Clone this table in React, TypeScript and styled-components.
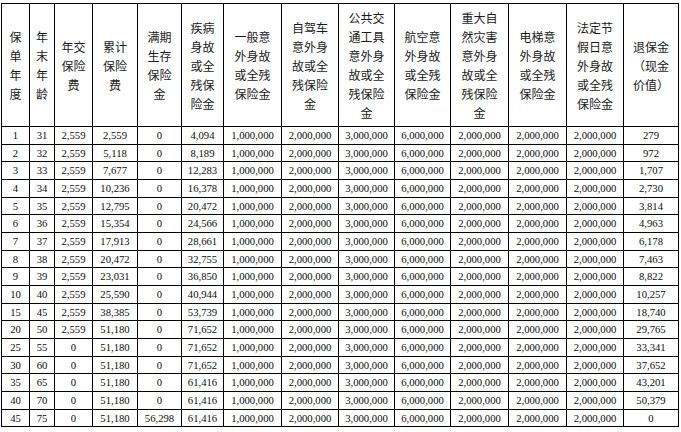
import React from "react";
import styled, { createGlobalStyle } from "styled-components";

const Global = createGlobalStyle`
  html, body { margin: 0; padding: 0; background: #fff; }
  body { font-family: "Liberation Serif", "Noto Sans CJK SC", serif; color: #000; }
`;

const Page = styled.div`
  padding: 3px 0 0 1px;
`;

const Table = styled.table`
  border-collapse: collapse;
  table-layout: fixed;
  width: 677px;
`;

const HeadCell = styled.th`
  border: 1px solid #000;
  padding: 0;
  height: 122px;
  font-family: "Noto Sans CJK SC", sans-serif;
  font-weight: normal;
  font-size: 12px;
  line-height: 19px;
  color: #1a1a1a;
  text-align: center;
  vertical-align: middle;
`;

const BodyRow = styled.tr`
  height: 17.65px;
`;

const Cell = styled.td`
  border: 1px solid #000;
  padding: 0;
  font-family: "Liberation Serif", serif;
  font-size: 10.7px;
  line-height: 16.65px;
  color: #0d0d0d;
  text-align: center;
  vertical-align: middle;
  white-space: nowrap;
`;

const widths = [28, 25, 38, 45, 44, 42, 58, 57, 56, 56, 58, 58, 57, 55];

const headers: string[][] = [
  ["保", "单", "年", "度"],
  ["年", "末", "年", "龄"],
  ["年交", "保险", "费"],
  ["累计", "保险", "费"],
  ["满期", "生存", "保险", "金"],
  ["疾病", "身故", "或全", "残保", "险金"],
  ["一般意", "外身故", "或全残", "保险金"],
  ["自驾车", "意外身", "故或全", "残保险", "金"],
  ["公共交", "通工具", "意外身", "故或全", "残保险", "金"],
  ["航空意", "外身故", "或全残", "保险金"],
  ["重大自", "然灾害", "意外身", "故或全", "残保险", "金"],
  ["电梯意", "外身故", "或全残", "保险金"],
  ["法定节", "假日意", "外身故", "或全残", "保险金"],
  ["退保金", "（现金", "价值）"],
];

type R = [string, string, string, string, string, string, string];
const base: R[] = [
  ["1", "31", "2,559", "2,559", "0", "4,094", "279"],
  ["2", "32", "2,559", "5,118", "0", "8,189", "972"],
  ["3", "33", "2,559", "7,677", "0", "12,283", "1,707"],
  ["4", "34", "2,559", "10,236", "0", "16,378", "2,730"],
  ["5", "35", "2,559", "12,795", "0", "20,472", "3,814"],
  ["6", "36", "2,559", "15,354", "0", "24,566", "4,963"],
  ["7", "37", "2,559", "17,913", "0", "28,661", "6,178"],
  ["8", "38", "2,559", "20,472", "0", "32,755", "7,463"],
  ["9", "39", "2,559", "23,031", "0", "36,850", "8,822"],
  ["10", "40", "2,559", "25,590", "0", "40,944", "10,257"],
  ["15", "45", "2,559", "38,385", "0", "53,739", "18,740"],
  ["20", "50", "2,559", "51,180", "0", "71,652", "29,765"],
  ["25", "55", "0", "51,180", "0", "71,652", "33,341"],
  ["30", "60", "0", "51,180", "0", "71,652", "37,652"],
  ["35", "65", "0", "51,180", "0", "61,416", "43,201"],
  ["40", "70", "0", "51,180", "0", "61,416", "50,379"],
  ["45", "75", "0", "51,180", "56,298", "61,416", "0"],
];

const fixed = ["1,000,000", "2,000,000", "3,000,000", "6,000,000", "2,000,000", "2,000,000", "2,000,000"];

const rows: string[][] = base.map((r) => [...r.slice(0, 6), ...fixed, r[6]]);

export default function App() {
  return (
    <>
      <Global />
      <Page>
        <Table>
          <colgroup>
            {widths.map((w, i) => (
              <col key={i} style={{ width: w }} />
            ))}
          </colgroup>
          <thead>
            <tr>
              {headers.map((lines, i) => (
                <HeadCell key={i}>
                  {lines.map((l, j) => (
                    <React.Fragment key={j}>
                      {j > 0 && <br />}
                      {l}
                    </React.Fragment>
                  ))}
                </HeadCell>
              ))}
            </tr>
          </thead>
          <tbody>
            {rows.map((r, i) => (
              <BodyRow key={i}>
                {r.map((c, j) => (
                  <Cell key={j}>{c}</Cell>
                ))}
              </BodyRow>
            ))}
          </tbody>
        </Table>
      </Page>
    </>
  );
}
